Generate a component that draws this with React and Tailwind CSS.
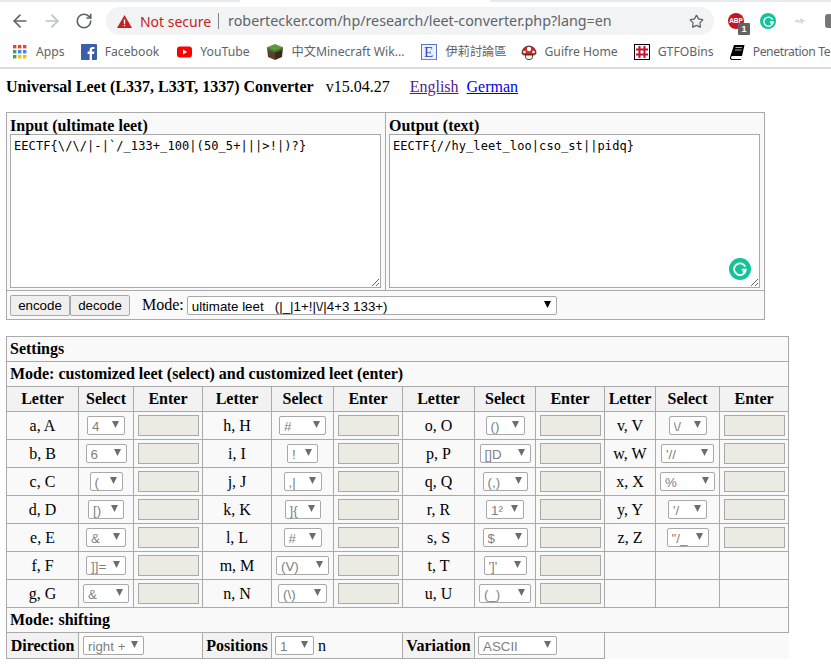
import { ArrowLeft, ArrowRight, RotateCw, Star } from "lucide-react";

const SERIF = "font-['Liberation_Serif',serif]";
const SANS = "font-['Liberation_Sans',Arial,sans-serif]";

// letter, select value, select width
const columns = [
  [
    ["a, A", "4", "w-[38px]"],
    ["b, B", "6", "w-[41px]"],
    ["c, C", "(", "w-[33px]"],
    ["d, D", "[)", "w-[36px]"],
    ["e, E", "&", "w-[40px]"],
    ["f, F", "]]=", "w-[40px]"],
    ["g, G", "&", "w-[46px]"],
  ],
  [
    ["h, H", "#", "w-[47px]"],
    ["i, I", "!", "w-[31px]"],
    ["j, J", ",|", "w-[38px]"],
    ["k, K", "]{", "w-[36px]"],
    ["l, L", "#", "w-[38px]"],
    ["m, M", "(V)", "w-[53px]"],
    ["n, N", "(\\)", "w-[49px]"],
  ],
  [
    ["o, O", "()", "w-[39px]"],
    ["p, P", "[]D", "w-[51px]"],
    ["q, Q", "(,)", "w-[45px]"],
    ["r, R", "1²", "w-[38px]"],
    ["s, S", "$", "w-[45px]"],
    ["t, T", "']'", "w-[43px]"],
    ["u, U", "(_)", "w-[52px]"],
  ],
  [
    ["v, V", "\\/", "w-[38px]"],
    ["w, W", "'//", "w-[53px]"],
    ["x, X", "%", "w-[55px]"],
    ["y, Y", "'/", "w-[39px]"],
    ["z, Z", "\"/_", "w-[42px]"],
  ],
];

const rows = [0, 1, 2, 3, 4, 5, 6];
const cell = "border border-[#aaaaaa] p-0 text-center align-middle";
const th = "border border-[#aaaaaa] bg-[#f2f2f2] p-0 text-center font-bold";

const Arrow = ({ color }) => (
  <svg width="7" height="7" viewBox="0 0 7 7" className="pointer-events-none absolute right-[6px] top-[5px]">
    <path d="M0 0h7L3.500 7z" fill={color} />
  </svg>
);

const Pick = ({ value, className = "" }) => (
  <div className={`relative h-[19px] ${className}`}>
    <select
      disabled
      value={value}
      onChange={() => {}}
      className={`block h-full w-full appearance-none border border-[#a9a9a9] rounded-[2px] bg-white pl-[4px] text-[13.33px] text-[#808080] opacity-100 ${SANS}`}
    >
      <option value={value}>{value}</option>
    </select>
    <Arrow color="#6d6d6d" />
  </div>
);

const Bookmark = ({ icon, label, className = "gap-2" }) => (
  <div className={`flex items-center shrink-0 whitespace-nowrap ${className}`}>
    {icon}
    <span>{label}</span>
  </div>
);

const AppsIcon = () => (
  <svg width="14" height="14" viewBox="0 0 14 14" className="ml-[13px]">
    {["#ea4335", "#ea4335", "#ea4335", "#34a853", "#4285f4", "#4285f4", "#34a853", "#fbbc05", "#fbbc05"].map((c, i) => (
      <rect key={i} x={(i % 3) * 5} y={Math.floor(i / 3) * 5} width="3.4" height="3.4" fill={c} />
    ))}
  </svg>
);

const FacebookIcon = () => (
  <svg width="16" height="16" viewBox="0 0 16 16">
    <rect width="16" height="16" rx="1" fill="#3b5ea8" />
    <path d="M11 16v-6h2l.3-2.4H11V6.2c0-.7.2-1.1 1.2-1.1h1.2V3c-.3 0-1-.1-1.8-.1-1.8 0-3 1.1-3 3.1v1.6h-2V10h2v6z" fill="#fff" />
  </svg>
);

const YoutubeIcon = () => (
  <svg width="15" height="16" viewBox="0 0 15 16">
    <rect y="2.5" width="15" height="11" rx="3" fill="#f00" />
    <path d="M6 5.5v5l4.2-2.5z" fill="#fff" />
  </svg>
);

const BlockIcon = () => (
  <svg width="16" height="16" viewBox="0 0 16 16">
    <path d="M8 0l8 3.2L8 6.4 0 3.2z" fill="#5d9a3a" />
    <path d="M0 3.2l8 3.2V16l-7-3z" fill="#5a4030" />
    <path d="M16 3.2L8 6.4V16l7-3z" fill="#3d2a1e" />
    <path d="M0 3.2l8 3.2v2L0 5.4zM16 3.2l-8 3.2v2l8-3z" fill="#467a2c" />
  </svg>
);

const EIcon = () => (
  <div className={`flex h-4 w-4 items-center justify-center border border-l-[#c0603a] border-b-[#55aa55] border-t-[#5577cc] border-r-[#5577cc] bg-[#eef0fb] text-[15px] leading-none text-[#3344bb] ${SERIF}`}>
    E
  </div>
);

const MushroomIcon = () => (
  <svg width="16" height="16" viewBox="0 0 16 16">
    <path d="M1 9a7 7 0 0 1 14 0c0 1.500-1.500 2-3 2H4c-1.500 0-3-.5-3-2z" fill="#d3281f" stroke="#222" strokeWidth=".8" />
    <circle cx="8" cy="5" r="2.200" fill="#fff" />
    <circle cx="3.500" cy="8" r="1.300" fill="#fff" />
    <circle cx="12.500" cy="8" r="1.300" fill="#fff" />
    <path d="M4.500 11h7v2.500a2.500 2.500 0 0 1-2.500 2H7a2.500 2.500 0 0 1-2.500-2z" fill="#f1efe6" stroke="#222" strokeWidth=".8" />
  </svg>
);

const HashIcon = () => (
  <svg width="16" height="16" viewBox="0 0 16 16">
    <rect x=".5" y=".5" width="15" height="15" fill="#fff" stroke="#000" />
    <path d="M5.500 2v12M10.500 2v12M2 5.500h12M2 10.500h12" stroke="#c8102e" strokeWidth="2" />
  </svg>
);

const BookIcon = () => (
  <svg width="15" height="16" viewBox="0 0 15 16">
    <path d="M4 1h10.500l-2.500 11H2.500a1.500 1.500 0 0 0 0 3H11l-.3 1H2a2 2 0 0 1-2-2.500z" fill="#000" />
    <path d="M5.500 3.500h6.500M5 6h6.500" stroke="#fff" strokeWidth=".7" />
  </svg>
);

const GrammarlyMark = ({ size }) => (
  <svg width={size} height={size} viewBox="0 0 12 12" fill="none" stroke="#fff" strokeWidth="1.500">
    <path d="M10.500 4A5 5 0 1 0 11 6.500H7.500" />
    <path d="M10.800 6.500L8.500 9" />
  </svg>
);

const Toolbar = () => (
  <div className="h-[69px] border-b-2 border-[#dadce0] bg-white font-['Noto_Sans','Noto_Sans_CJK_TC',sans-serif] text-[#5f6368]">
    <div className="flex h-[2px]">
      <div className="w-[240px] bg-[#e8eaed]" />
      <div className="w-[250px] bg-white" />
      <div className="flex-1 bg-[#e8eaed]" />
    </div>
    <div className="flex h-[34px] items-center pt-[4px]">
      <ArrowLeft size={20} strokeWidth={2} className="ml-[10px] text-[#5f6368]" />
      <ArrowRight size={20} strokeWidth={2} className="ml-[12px] text-[#bdc1c6]" />
      <RotateCw size={18} strokeWidth={2.2} className="ml-[13px] text-[#5f6368]" />
      <div className="ml-[13px] flex h-[28px] w-[609px] items-center rounded-full bg-[#f1f3f4] text-[14px]">
        <svg width="15" height="13" viewBox="0 0 15 13" className="ml-[11px]">
          <path d="M7.500 0L15 13H0z" fill="#c5221f" />
          <rect x="6.800" y="4.500" width="1.400" height="4.300" fill="#fff" />
          <rect x="6.800" y="9.800" width="1.400" height="1.400" fill="#fff" />
        </svg>
        <span className="ml-[8px] text-[#c5221f]">Not secure</span>
        <span className="ml-[7px] h-[16px] w-px bg-[#80868b]" />
        <span className="ml-[9px] whitespace-nowrap text-[14.3px] text-[#5f6368]">robertecker.com/hp/research/leet-converter.php?lang=en</span>
        <Star size={15} strokeWidth={2} className="ml-auto mr-[10px] text-[#5f6368]" />
      </div>
      <div className="relative ml-[14px] flex h-[16px] w-[16px] shrink-0 items-center justify-center rounded-full bg-[#c4161c] font-['Liberation_Sans',sans-serif] text-[6.5px] font-bold leading-none text-white">
        ABP
        <span className="absolute left-[10px] top-[10px] flex h-[12px] w-[12px] items-center justify-center rounded-[1px] bg-[#5f6368] text-[9px]">1</span>
      </div>
      <div className="ml-[16px] flex h-[16px] w-[16px] shrink-0 items-center justify-center rounded-full bg-[#15c39a]">
        <GrammarlyMark size={11} />
      </div>
      <svg width="12" height="10" viewBox="0 0 12 10" className="ml-[18px] shrink-0">
        <path d="M0 6l3-3 2 2 2-3 2 2 3 0-3 2-1 2-2-2-2 1-1-1z" fill="#d8d8d8" />
      </svg>
      <div className="ml-[19px] h-[14px] w-[6px] shrink-0 rounded-l-[3px] bg-[#777]" />
    </div>
    <div className="flex h-[31px] items-center overflow-hidden pt-[2px] text-[12.2px] text-[#5f6368]">
      <Bookmark icon={<AppsIcon />} label="Apps" className="gap-[9px]" />
      <Bookmark icon={<FacebookIcon />} label="Facebook" className="ml-[16px] gap-2" />
      <Bookmark icon={<YoutubeIcon />} label="YouTube" className="ml-[18px] gap-2" />
      <Bookmark icon={<BlockIcon />} label="中文Minecraft Wik..." className="ml-[17px] gap-[9px]" />
      <Bookmark icon={<EIcon />} label="伊莉討論區" className="ml-[16px] gap-[9px]" />
      <Bookmark icon={<MushroomIcon />} label="Guifre Home" className="ml-[15px] gap-[7px]" />
      <Bookmark icon={<HashIcon />} label="GTFOBins" className="ml-[16px] gap-2" />
      <Bookmark icon={<BookIcon />} label={<span className="tracking-[-0.4px]">Penetration Te</span>} className="ml-[16px] gap-2" />
    </div>
  </div>
);

const Converter = () => (
  <table className="ml-[6px] mt-[16px] w-[758px] table-fixed border-collapse bg-[#f9f9f9]">
    <colgroup>
      <col className="w-[379px]" />
      <col className="w-[379px]" />
    </colgroup>
    <tbody>
      <tr>
        <td className="h-[178px] border border-[#aaaaaa] p-0 pb-[2px] pl-[3px] pt-[4px] align-top">
          <div className="font-bold leading-[17px]">Input (ultimate leet)</div>
          <textarea
            readOnly
            value={"EECTF{\\/\\/|-|`/_133+_100|(50_5+|||>!|)?}"}
            className="block h-[154px] w-[371px] border border-[#a9a9a9] bg-white px-[3px] py-[2px] font-['DejaVu_Sans_Mono',monospace] text-[12px] tracking-[0.08px] text-black"
          />
        </td>
        <td className="relative border border-[#aaaaaa] p-0 pb-[2px] pl-[3px] pt-[4px] align-top">
          <div className="font-bold leading-[17px]">Output (text)</div>
          <textarea
            readOnly
            value="EECTF{//hy_leet_loo|cso_st||pidq}"
            className="block h-[154px] w-[371px] border border-[#a9a9a9] bg-white px-[3px] py-[2px] font-['DejaVu_Sans_Mono',monospace] text-[12px] tracking-[0.08px] text-black"
          />
          <div className="absolute left-[343px] top-[145px] flex h-[22px] w-[22px] items-center justify-center rounded-full bg-[#15c39a]">
            <GrammarlyMark size={14} />
          </div>
        </td>
      </tr>
      <tr>
        <td colSpan={2} className="h-[29px] border border-[#aaaaaa] p-0 pl-[3px]">
          <div className="flex items-center">
            <button className={`h-[21px] w-[60px] border border-[#a9a9a9] rounded-[2px] bg-[#efefef] text-[13.33px] text-black ${SANS}`}>encode</button>
            <button className={`h-[21px] w-[60px] border border-[#a9a9a9] rounded-[2px] bg-[#efefef] text-[13.33px] text-black ${SANS}`}>decode</button>
            <span className="ml-[12px]">Mode:</span>
            <div className="relative ml-[3px] h-[19px] w-[370px]">
              <select
                value="ultimate"
                onChange={() => {}}
                className={`block h-full w-full appearance-none border border-[#a9a9a9] rounded-[2px] bg-white pl-[4px] text-[13.33px] text-black ${SANS}`}
              >
                <option value="ultimate">ultimate leet &nbsp; (|_|1+!|\/|4+3 133+)</option>
              </select>
              <Arrow color="#000000" />
            </div>
          </div>
        </td>
      </tr>
    </tbody>
  </table>
);

const Settings = () => (
  <table className="ml-[6px] mt-[16px] w-[783px] table-fixed border-collapse bg-[#f9f9f9]">
    <colgroup>
      <col className="w-[72px]" />
      <col className="w-[55px]" />
      <col className="w-[69px]" />
      <col className="w-[69px]" />
      <col className="w-[62px]" />
      <col className="w-[69px]" />
      <col className="w-[72px]" />
      <col className="w-[61px]" />
      <col className="w-[69px]" />
      <col className="w-[51px]" />
      <col className="w-[64px]" />
      <col className="w-[69px]" />
    </colgroup>
    <tbody>
      <tr className="h-[25px]">
        <td colSpan={12} className="border border-[#aaaaaa] p-0 pl-[3px] font-bold">Settings</td>
      </tr>
      <tr className="h-[25px]">
        <td colSpan={12} className="border border-[#aaaaaa] p-0 pl-[3px] font-bold">Mode: customized leet (select) and customized leet (enter)</td>
      </tr>
      <tr className="h-[25px]">
        {columns.map((_, i) => [
          <th key={`l${i}`} className={th}>Letter</th>,
          <th key={`s${i}`} className={th}>Select</th>,
          <th key={`e${i}`} className={th}>Enter</th>,
        ])}
      </tr>
      {rows.map((r) => (
        <tr key={r} className="h-[28px]">
          {columns.map((col, i) =>
            col[r]
              ? [
                  <td key={`l${i}`} className={cell}>{col[r][0]}</td>,
                  <td key={`s${i}`} className={cell}>
                    <Pick value={col[r][1]} className={`${col[r][2]} mx-auto`} />
                  </td>,
                  <td key={`e${i}`} className={cell}>
                    <input disabled className="mx-auto block h-[21px] w-[61px] border border-[#a9a9a9] bg-[#ebebe4]" />
                  </td>,
                ]
              : [
                  <td key={`l${i}`} className={cell} />,
                  <td key={`s${i}`} className={cell} />,
                  <td key={`e${i}`} className={cell} />,
                ]
          )}
        </tr>
      ))}
      <tr className="h-[25px]">
        <td colSpan={12} className="border border-[#aaaaaa] p-0 pl-[3px] font-bold">Mode: shifting</td>
      </tr>
      <tr className="h-[26px]">
        <th className={th}>Direction</th>
        <td colSpan={2} className="border border-[#aaaaaa] p-0 pl-[4px]">
          <Pick value="right +" className="w-[61px]" />
        </td>
        <th className={th}>Positions</th>
        <td colSpan={2} className="border border-[#aaaaaa] p-0 pl-[3px]">
          <div className="flex items-center gap-[4px]">
            <Pick value="1" className="w-[39px]" />
            <span>n</span>
          </div>
        </td>
        <th className={th}>Variation</th>
        <td colSpan={2} className="border border-[#aaaaaa] p-0 pl-[3px]">
          <Pick value="ASCII" className="w-[79px]" />
        </td>
        <td colSpan={3} className="border-0 p-0" />
      </tr>
    </tbody>
  </table>
);

export default function App() {
  return (
    <div className={`h-[669px] w-[831px] overflow-hidden bg-white text-[16px] text-black ${SERIF}`}>
      <Toolbar />
      <div className="ml-[6px] mt-[9px] flex h-[18px] items-center whitespace-nowrap leading-[18px]">
        <span className="font-bold">Universal Leet (L337, L33T, 1337) Converter</span>
        <span className="ml-[12px]">v15.04.27</span>
        <a href="#en" className="ml-[20px] text-[#551a8b] underline">English</a>
        <a href="#de" className="ml-[8px] text-[#0000ee] underline">German</a>
      </div>
      <Converter />
      <Settings />
    </div>
  );
}
